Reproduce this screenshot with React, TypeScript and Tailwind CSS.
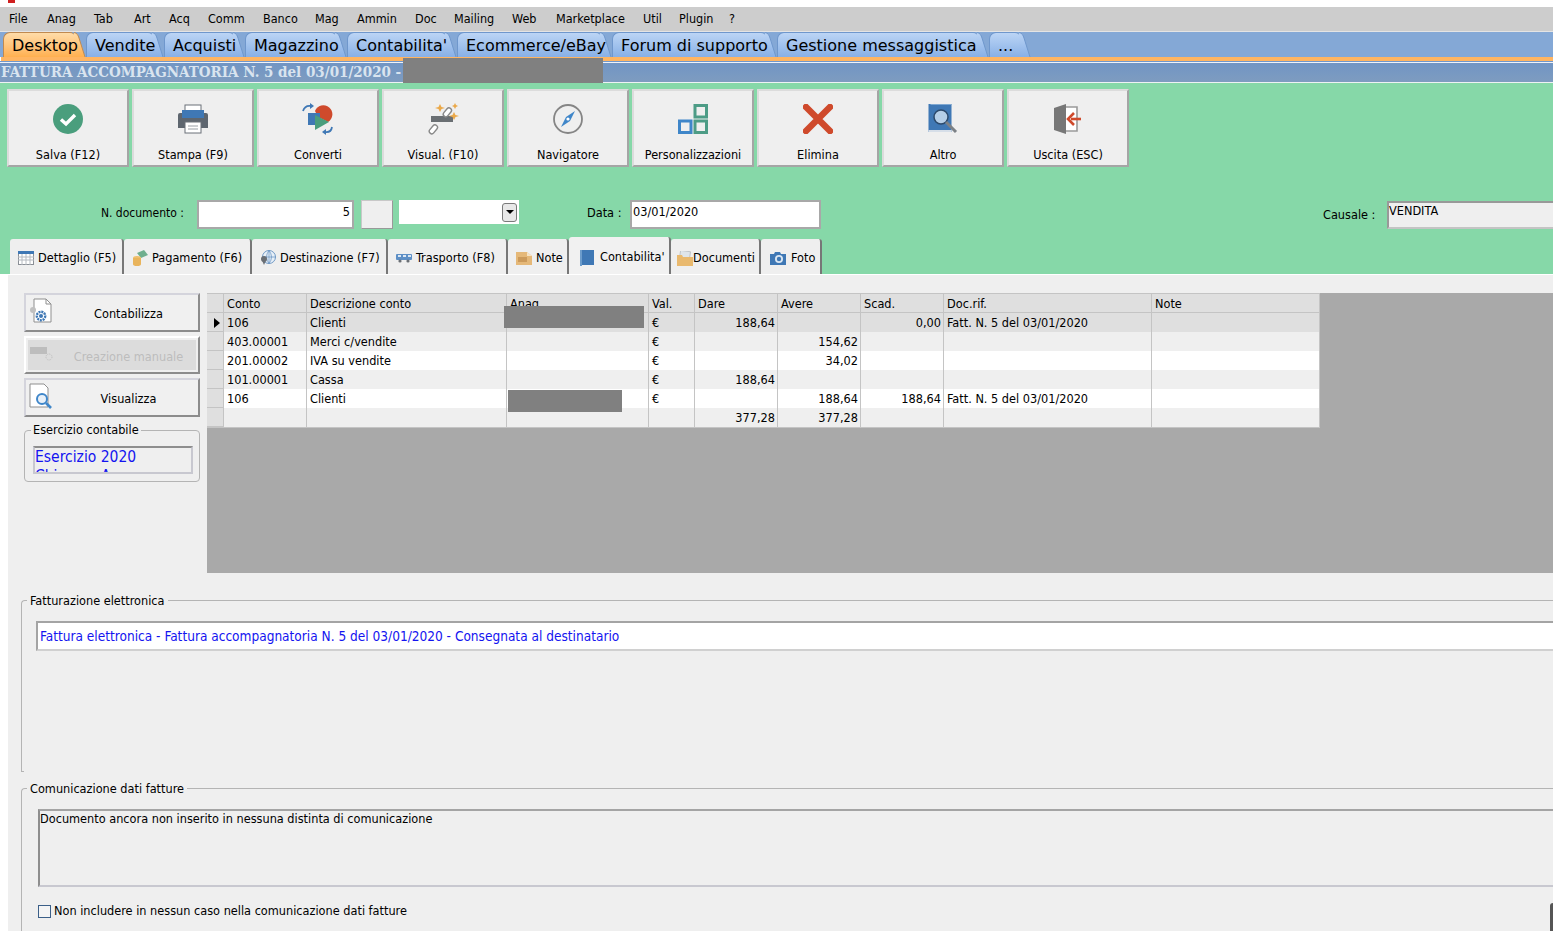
import React from 'react';

const menuItems = [
  { label: 'File', w: 'w-[38px]' },
  { label: 'Anag', w: 'w-[47px]' },
  { label: 'Tab', w: 'w-[40px]' },
  { label: 'Art', w: 'w-[35px]' },
  { label: 'Acq', w: 'w-[39px]' },
  { label: 'Comm', w: 'w-[55px]' },
  { label: 'Banco', w: 'w-[52px]' },
  { label: 'Mag', w: 'w-[42px]' },
  { label: 'Ammin', w: 'w-[58px]' },
  { label: 'Doc', w: 'w-[39px]' },
  { label: 'Mailing', w: 'w-[58px]' },
  { label: 'Web', w: 'w-[44px]' },
  { label: 'Marketplace', w: 'w-[87px]' },
  { label: 'Util', w: 'w-[36px]' },
  { label: 'Plugin', w: 'w-[50px]' },
  { label: '?', w: 'w-[14px]' },
];

const mainTabs = [
  { label: 'Desktop', w: 'w-[83px]', active: true },
  { label: 'Vendite', w: 'w-[78px]' },
  { label: 'Acquisti', w: 'w-[81px]' },
  { label: 'Magazzino', w: 'w-[102px]' },
  { label: "Contabilita'", w: 'w-[110px]' },
  { label: 'Ecommerce/eBay', w: 'w-[155px]' },
  { label: 'Forum di supporto', w: 'w-[165px]' },
  { label: 'Gestione messaggistica', w: 'w-[212px]' },
  { label: '...', w: 'w-[42px]' },
];

const MainTab = ({ label, w, active }: { label: string; w: string; active?: boolean }) => {
  const gradId = active ? 'tailOn' : 'tailOff';
  return (
    <div className={`relative h-[25px] shrink-0 ${w}`}>
      <div
        className={`absolute left-0 top-0 bottom-0 right-[11px] rounded-tl-[7px] rounded-tr-[5px] border-t border-l ${
          active
            ? 'bg-gradient-to-b from-[#ffdca8] to-[#ffb04f] border-[#c08a50]'
            : 'bg-gradient-to-b from-[#bcd5f5] to-[#88b0e6] border-[#6f97cc]'
        }`}
      />
      <svg className="absolute right-0 top-0" width="12" height="25" viewBox="0 0 12 25">
        <defs>
          <linearGradient id={gradId} x1="0" y1="0" x2="0" y2="1">
            <stop offset="0" stopColor={active ? '#ffdca8' : '#bcd5f5'} />
            <stop offset="1" stopColor={active ? '#ffb04f' : '#88b0e6'} />
          </linearGradient>
        </defs>
        <path d="M0 0.5 C3 1 4 3 5 6 L11 25 H0 Z" fill={`url(#${gradId})`} />
        <path d="M0 0.5 C3 1 4 3 5 6 L11 25" fill="none" stroke={active ? '#c08a50' : '#6f97cc'} />
      </svg>
      <span className="absolute left-[9px] top-0 leading-[27px] whitespace-nowrap">{label}</span>
    </div>
  );
};

const IconSave = () => (
  <svg width="30" height="30" viewBox="0 0 30 30">
    <circle cx="15" cy="15" r="15" fill="#4a9e7d" />
    <path d="M8 15.5 L13 20 L22 11" fill="none" stroke="#fff" strokeWidth="3.4" />
  </svg>
);

const IconPrint = () => (
  <svg width="30" height="30" viewBox="0 0 30 30">
    <rect x="7" y="1" width="16" height="8" fill="#fff" stroke="#6b7078" />
    <path d="M2 9 H28 Q30 9 30 11 V24 H0 V11 Q0 9 2 9 Z" fill="#5e666f" />
    <rect x="4" y="6" width="22" height="8" fill="#3f78b5" />
    <rect x="7" y="18" width="16" height="11" fill="#fff" stroke="#6b7078" />
    <path d="M10 22 H20 M10 25 H20" stroke="#9aa0a6" />
  </svg>
);

const IconConvert = () => (
  <svg width="32" height="32" viewBox="0 0 32 32">
    <path d="M13 8 A9 9 0 1 1 26 19 L16 14 Z" fill="#cf4a2c" />
    <rect x="6" y="10" width="12" height="12" fill="#3f78b5" />
    <path d="M13 12 L27 19 L13 27 Z" fill="#4a9e7d" />
    <path d="M1 8 Q3 2 9 3" fill="none" stroke="#3f78b5" strokeWidth="1.8" />
    <path d="M8 0 L12 3 L8 6 Z" fill="#3f78b5" />
    <path d="M30 24 Q29 30 23 29" fill="none" stroke="#3f78b5" strokeWidth="1.8" />
    <path d="M24 26 L20 29 L24 32 Z" fill="#3f78b5" />
  </svg>
);

const IconLink = () => (
  <svg width="32" height="32" viewBox="0 0 32 32">
    <rect x="4" y="13" width="22" height="6" fill="#6a6f73" />
    <rect x="18" y="4" width="5" height="10" rx="2.5" transform="rotate(40 20 9)" fill="#fff" stroke="#888" strokeWidth="1.4" />
    <rect x="4" y="21" width="5" height="10" rx="2.5" transform="rotate(40 6 26)" fill="#fff" stroke="#888" strokeWidth="1.4" />
    <path d="M13 1 L14.5 4 L18 5 L14.5 6 L13 9 L11.5 6 L8 5 L11.5 4 Z" fill="#eba94a" />
    <path d="M28 0 L29 2 L31 3 L29 4 L28 6 L27 4 L25 3 L27 2 Z" fill="#eba94a" />
    <path d="M27 9 L28.5 12 L32 13 L28.5 14 L27 17 L25.5 14 L22 13 L25.5 12 Z" fill="#eba94a" />
  </svg>
);

const IconCompass = () => (
  <svg width="30" height="30" viewBox="0 0 30 30">
    <circle cx="15" cy="15" r="14" fill="none" stroke="#858585" strokeWidth="1.8" />
    <path d="M22 7 L17 17 L8 23 L13 13 Z" fill="#3f86c9" />
    <circle cx="15" cy="15" r="1.6" fill="#fff" />
  </svg>
);

const IconBlocks = () => (
  <svg width="30" height="30" viewBox="0 0 30 30">
    <rect x="17" y="1.5" width="11.5" height="11.5" fill="none" stroke="#4d9c86" strokeWidth="3" />
    <rect x="1.5" y="17" width="11.5" height="11.5" fill="none" stroke="#3f86c9" strokeWidth="3" />
    <rect x="17" y="17" width="11.5" height="11.5" fill="none" stroke="#4d9c86" strokeWidth="3" />
  </svg>
);

const IconDelete = () => (
  <svg width="30" height="30" viewBox="0 0 30 30">
    <path d="M3 3 L27 27 M27 3 L3 27" stroke="#cf4a2c" strokeWidth="6.5" strokeLinecap="round" />
  </svg>
);

const IconBook = () => (
  <svg width="30" height="30" viewBox="0 0 30 30">
    <rect x="0.5" y="0" width="23" height="28" fill="#3f78b5" />
    <rect x="0.5" y="26" width="23" height="2" fill="#d6deE8" />
    <rect x="2.5" y="0" width="21" height="1" fill="#7fa8d2" />
    <circle cx="13" cy="13" r="7" fill="#b5cfe8" stroke="#2c4a6c" strokeWidth="1.5" />
    <path d="M18 18 L28 28" stroke="#7c8186" strokeWidth="3" />
  </svg>
);

const IconExit = () => (
  <svg width="30" height="30" viewBox="0 0 30 30">
    <path d="M12 3 H24 V27 H12" fill="#fff" stroke="#9a9a9a" strokeWidth="1.6" />
    <path d="M1 4 L13 0 V30 L1 26 Z" fill="#777" />
    <path d="M28 15 H18" stroke="#cf4a2c" strokeWidth="2.6" />
    <path d="M21 9 L15 15 L21 21" fill="none" stroke="#cf4a2c" strokeWidth="2.6" />
  </svg>
);

const toolbar = [
  { label: 'Salva (F12)', icon: <IconSave /> },
  { label: 'Stampa (F9)', icon: <IconPrint /> },
  { label: 'Converti', icon: <IconConvert /> },
  { label: 'Visual. (F10)', icon: <IconLink /> },
  { label: 'Navigatore', icon: <IconCompass /> },
  { label: 'Personalizzazioni', icon: <IconBlocks /> },
  { label: 'Elimina', icon: <IconDelete /> },
  { label: 'Altro', icon: <IconBook /> },
  { label: 'Uscita (ESC)', icon: <IconExit /> },
];

const TabCalendar = () => (
  <svg width="16" height="14" viewBox="0 0 16 14">
    <rect x="0.5" y="0.5" width="15" height="13" fill="#fff" stroke="#8a8f96" />
    <rect x="0" y="0" width="16" height="3" fill="#3f78b5" />
    <path d="M0 6 H16 M0 9 H16 M4 3 V14 M8 3 V14 M12 3 V14" stroke="#b5bac0" />
  </svg>
);
const TabMoney = () => (
  <svg width="16" height="16" viewBox="0 0 16 16">
    <path d="M5 3 L12 0 L16 5 L9 8 Z" fill="#6fae8e" />
    <ellipse cx="5" cy="8" rx="4" ry="2" fill="#efbf6a" />
    <rect x="1" y="8" width="8" height="6" fill="#e9b45c" />
    <ellipse cx="5" cy="14" rx="4" ry="2" fill="#e9b45c" />
  </svg>
);
const TabGlobe = () => (
  <svg width="16" height="16" viewBox="0 0 16 16">
    <circle cx="9" cy="7" r="6.5" fill="#e8f0f8" stroke="#6d97c4" />
    <path d="M2.5 7 H15.5 M9 0.5 V13.5 M9 0.5 Q4 7 9 13.5 M9 0.5 Q14 7 9 13.5" fill="none" stroke="#6d97c4" strokeWidth="0.8" />
    <circle cx="4" cy="9" r="3" fill="#6a6f75" />
    <path d="M2 10.5 L4 15 L6 10.5 Z" fill="#6a6f75" />
  </svg>
);
const TabTruck = () => (
  <svg width="16" height="10" viewBox="0 0 16 10">
    <rect x="0" y="1" width="16" height="6" rx="1" fill="#5d8fc6" />
    <rect x="2" y="2" width="3" height="2" fill="#dbe7f3" />
    <rect x="7" y="2" width="3" height="2" fill="#dbe7f3" />
    <rect x="12" y="2" width="3" height="2" fill="#dbe7f3" />
    <circle cx="4" cy="8" r="1.6" fill="#6a6f75" />
    <circle cx="12" cy="8" r="1.6" fill="#6a6f75" />
  </svg>
);
const TabNote = () => (
  <svg width="16" height="14" viewBox="0 0 16 14">
    <path d="M0 1 H11 L16 5 V14 H0 Z" fill="#e5b878" />
    <path d="M11 1 V5 H16 Z" fill="#f6e3c5" />
    <rect x="2" y="6" width="9" height="5" fill="#cc9a5a" />
  </svg>
);
const TabLedger = () => (
  <svg width="14" height="16" viewBox="0 0 14 16">
    <rect x="1" y="0" width="13" height="15" fill="#3f78b5" />
    <rect x="0" y="0" width="2" height="16" fill="#6c9ccb" />
  </svg>
);
const TabFolder = () => (
  <svg width="16" height="15" viewBox="0 0 16 15">
    <rect x="3" y="0" width="10" height="8" fill="#dfe5ea" stroke="#a7adb3" strokeWidth="0.6" transform="rotate(8 8 4)" />
    <path d="M0 4 H5 L6 6 H16 V15 H0 Z" fill="#e9b96e" />
  </svg>
);
const TabCamera = () => (
  <svg width="16" height="13" viewBox="0 0 16 13">
    <path d="M0 2 H4 L5 0 H10 L11 2 H16 V13 H0 Z" fill="#3f78b5" />
    <circle cx="9" cy="7" r="4" fill="#dbe7f3" />
    <circle cx="9" cy="7" r="2.2" fill="#3f78b5" />
  </svg>
);

const docTabs = [
  { label: 'Dettaglio (F5)', icon: <TabCalendar />, w: 'w-[114px]', pl: 'pl-[8px]', gap: 'gap-[4px]' },
  { label: 'Pagamento (F6)', icon: <TabMoney />, w: 'w-[128px]', pl: 'pl-[8px]', gap: 'gap-[4px]' },
  { label: 'Destinazione (F7)', icon: <TabGlobe />, w: 'w-[136px]', pl: 'pl-[8px]', gap: 'gap-[4px]' },
  { label: 'Trasporto (F8)', icon: <TabTruck />, w: 'w-[120px]', pl: 'pl-[8px]', gap: 'gap-[4px]' },
  { label: 'Note', icon: <TabNote />, w: 'w-[61px]', pl: 'pl-[8px]', gap: 'gap-[4px]' },
  { label: "Contabilita'", icon: <TabLedger />, w: 'w-[102px]', pl: 'pl-[11px]', gap: 'gap-[6px]', active: true },
  { label: 'Documenti', icon: <TabFolder />, w: 'w-[90px]', pl: 'pl-[6px]', gap: 'gap-0' },
  { label: 'Foto', icon: <TabCamera />, w: 'w-[61px]', pl: 'pl-[9px]', gap: 'gap-[5px]' },
];

const rows = [
  { bg: 'bg-[#dfdfdf]', marker: true, c: ['106', 'Clienti', '', '€', '188,64', '', '0,00', 'Fatt. N. 5 del 03/01/2020', ''] },
  { bg: 'bg-[#efefef]', c: ['403.00001', 'Merci c/vendite', '', '€', '', '154,62', '', '', ''] },
  { bg: 'bg-white', c: ['201.00002', 'IVA su vendite', '', '€', '', '34,02', '', '', ''] },
  { bg: 'bg-[#efefef]', c: ['101.00001', 'Cassa', '', '€', '188,64', '', '', '', ''] },
  { bg: 'bg-white', c: ['106', 'Clienti', '', '€', '', '188,64', '188,64', 'Fatt. N. 5 del 03/01/2020', ''] },
  { bg: 'bg-[#efefef]', c: ['', '', '', '', '377,28', '377,28', '', '', ''] },
];

const headers = ['Conto', 'Descrizione conto', 'Anag.', 'Val.', 'Dare', 'Avere', 'Scad.', 'Doc.rif.', 'Note'];
const rightCols = [4, 5, 6];

const SideButton = ({ label, icon, className }: { label: string; icon: React.ReactNode; className: string }) => (
  <div className={`relative flex items-center justify-center pt-[3px] w-[176px] bg-[#f0f0f0] border-2 border-t-[#d4d4dc] border-l-[#d4d4dc] border-b-[#8c8c8c] border-r-[#8c8c8c] ${className}`}>
    <span className="absolute left-[3px] top-[3px]">{icon}</span>
    <span className="ml-[33px]">{label}</span>
  </div>
);

export default function App() {
  return (
    <div className="relative w-[1553px] h-[931px] overflow-hidden bg-white text-[12.6px] text-black font-['DejaVu_Sans_Condensed','Noto_Sans',sans-serif]">
      <div className="h-[3px] w-[7px] ml-[8px] bg-[#d02020]" />
      <div className="h-[4px]" />

      {/* menu */}
      <div className="flex items-center h-[25px] pl-[9px] pt-px bg-[#cdcdcd] text-[12.5px] border-b border-[#e4e4e4]">
        {menuItems.map((m) => (
          <span key={m.label} className={`shrink-0 ${m.w}`}>{m.label}</span>
        ))}
      </div>

      {/* main tabs */}
      <div className="flex pl-[3px] h-[25px] bg-[#84a8d6] text-[16px] font-['DejaVu_Sans',sans-serif]">
        {mainTabs.map((t) => (
          <MainTab key={t.label} {...t} />
        ))}
      </div>
      <div className="h-[4px] ml-[1px] bg-[#ffb562]" />
      <div className="h-px bg-[#6f97cc]" />
      <div className="h-px bg-[#f1f3f8]" />
      <div className="h-[19px] pl-[1px] leading-[18px] bg-gradient-to-b from-[#7195c4] to-[#7e9cc0] text-[#d9e4ef] text-[15px] font-bold whitespace-nowrap font-['DejaVu_Serif_Condensed','DejaVu_Serif',serif]">
        FATTURA ACCOMPAGNATORIA N. 5 del 03/01/2020 -
      </div>
      <div className="h-px bg-[#eef2f4]" />

      {/* green area */}
      <div className="h-[191px] bg-[#86d8a8] pt-[6px]">
        <div className="flex gap-[3px] pl-[7px]">
          {toolbar.map((b) => (
            <div
              key={b.label}
              className="flex flex-col items-center w-[122px] h-[78px] bg-[#efefef] border-2 border-t-[#dcdcdc] border-l-[#dcdcdc] border-b-[#a5a5a5] border-r-[#a5a5a5]"
            >
              <div className="h-[56px] shrink-0 flex items-center justify-center">{b.icon}</div>
              <span className="leading-[16px]">{b.label}</span>
            </div>
          ))}
        </div>

        <div className="flex mt-[33px] h-[29px] relative">
          <span className="w-[184px] text-right pt-[4px] text-[12px]">N. documento :</span>
          <div className="ml-[13px] w-[157px] h-[29px] bg-white border-2 border-[#a8a8a8] text-right pr-[2px] pt-[1px]">5</div>
          <div className="ml-[7px] w-[32px] h-[29px] bg-[#efefef] border border-[#c8c8c8] border-b-[#999] border-r-[#999]" />
          <div className="ml-[6px] w-[120px] h-[24px] bg-white flex items-center justify-end pr-[2px]">
            <div className="flex items-center justify-center w-[15px] h-[19px] rounded-[3px] bg-[#e8e8e8] border border-[#7a7a7a]">
              <span className="w-0 h-0 border-x-[4px] border-x-transparent border-t-[4px] border-t-black" />
            </div>
          </div>
          <span className="ml-[68px] pt-[4px] w-[35px] whitespace-nowrap">Data :</span>
          <div className="ml-[8px] w-[191px] h-[29px] bg-white border-2 border-[#a8a8a8] pl-[1px] pt-[1px]">03/01/2020</div>
          <span className="ml-[502px] pt-[6px] w-[54px] whitespace-nowrap">Causale :</span>
          <div className="ml-[10px] grow h-[28px] mt-[1px] bg-[#efefef] border-2 border-t-[#999] border-l-[#999] border-b-[#c4c4c4] border-r-0 leading-[16px]">VENDITA</div>
        </div>

        <div className="flex items-end mt-[8px] pl-[10px] h-[37px]">
          {docTabs.map((t) => (
            <div
              key={t.label}
              className={`flex items-center shrink-0 rounded-t-[3px] border-r-2 whitespace-nowrap ${t.w} ${t.pl} ${t.gap} ${
                t.active
                  ? 'h-[37px] bg-[#f1f1f1] border-[#777] pt-[4px]'
                  : 'h-[35px] bg-[#efefef] border-[#777] pt-[3px]'
              }`}
            >
              <span className="shrink-0">{t.icon}</span>
              <span>{t.label}</span>
            </div>
          ))}
        </div>
      </div>

      {/* panel */}
      <div className="ml-[8px] h-[657px] bg-[#efefef] border-t border-white">
        <div className="flex pt-[18px] pl-[16px] h-[299px]">
          <div className="w-[176px] shrink-0 flex flex-col">
            <SideButton
              label="Contabilizza"
              className="h-[39px]"
              icon={
                <svg width="24" height="26" viewBox="0 0 24 26">
                  <path d="M5 1 H17 L22 6 V24 H5 Z" fill="#fff" stroke="#8f8f8f" />
                  <path d="M17 1 V6 H22" fill="none" stroke="#8f8f8f" />
                  <circle cx="4" cy="12" r="3" fill="#c0c0c0" />
                  <circle cx="12" cy="18" r="4.2" fill="none" stroke="#3f78b5" strokeWidth="2.4" strokeDasharray="2 0.8" />
                  <circle cx="12" cy="18" r="2" fill="#3f78b5" />
                </svg>
              }
            />
            <div className="mt-[4px] h-[38px] w-[176px] border-2 border-t-white border-l-white border-b-[#8c8c8c] border-r-[#8c8c8c] p-[2px]">
              <div className="relative h-full bg-[#dcdcdc] text-[#bdbdbd] flex items-center justify-center pt-[5px]">
                <svg className="absolute left-[1px] top-[5px]" width="24" height="16" viewBox="0 0 24 16">
                  <rect x="1" y="2" width="17" height="7" fill="#bdbdbd" />
                  <circle cx="20" cy="12" r="3" fill="none" stroke="#bdbdbd" strokeDasharray="1 1" />
                </svg>
                <span className="ml-[33px]">Creazione manuale</span>
              </div>
            </div>
            <SideButton
              label="Visualizza"
              className="h-[39px] mt-[4px]"
              icon={
                <svg width="24" height="26" viewBox="0 0 24 26">
                  <path d="M1 1 H15 L19 5 V24 H1 Z" fill="#fff" stroke="#8f8f8f" />
                  <circle cx="13" cy="16" r="5" fill="#e8f0f8" stroke="#3f86c9" strokeWidth="2" />
                  <path d="M17 20 L22 25" stroke="#3f86c9" strokeWidth="2.6" />
                </svg>
              }
            />
            <div className="relative mt-[13px] h-[52px] border border-[#b4b4b4] rounded-[4px] pl-[8px] pr-[6px] pt-[15px]">
              <span className="absolute left-[6px] -top-[8px] px-[2px] bg-[#efefef] leading-[14px] whitespace-nowrap">Esercizio contabile</span>
              <div className="h-[28px] overflow-hidden border-2 border-t-[#8e8e8e] border-l-[#c8c8d0] border-b-[#c8c8d0] border-r-[#c8c8d0] text-[15.5px] leading-[19px] text-[#1414f0]">
                <div>Esercizio 2020</div>
                <div>Chiusura Anno</div>
              </div>
            </div>
          </div>

          <div className="ml-[7px] grow h-[280px] bg-[#a9a9a9] overflow-hidden">
            <div className="grid w-[1113px] border-y border-r-2 border-[#c4c4c4] grid-cols-[17px_83px_200px_142px_46px_83px_83px_83px_208px_168px]">
              <div className="h-[19px] bg-[#dfdfdf] border-r border-b border-[#c4c4c4]" />
              {headers.map((h) => (
                <div key={h} className="h-[19px] bg-[#dfdfdf] border-r border-b border-[#c4c4c4] pl-[3px] leading-[19px] whitespace-nowrap overflow-hidden">
                  {h}
                </div>
              ))}
              {rows.map((r, i) =>
                [
                  <div key={`m${i}`} className="h-[19px] flex items-center justify-center pl-[3px] pt-px bg-[#dfdfdf] border-r border-b border-[#c4c4c4]">
                    {r.marker && <span className="w-0 h-0 border-y-[5px] border-y-transparent border-l-[6px] border-l-black" />}
                  </div>,
                  ...r.c.map((v, j) => (
                    <div
                      key={`${i}-${j}`}
                      className={`h-[19px] leading-[19px] pl-[3px] pr-[2px] border-r border-[#c4c4c4] whitespace-nowrap ${r.bg} ${rightCols.includes(j) ? 'text-right' : 'text-left'}`}
                    >
                      {v}
                    </div>
                  )),
                ]
              )}
            </div>
          </div>
        </div>

        <div className="relative ml-[13px] mt-[26px] h-[172px] border-t border-l border-[#b4b4b4] rounded-tl-[4px] pt-[20px] pl-[14px]">
          <span className="absolute left-[5px] -top-[7px] px-[3px] bg-[#efefef] leading-[14px] whitespace-nowrap">Fatturazione elettronica</span>
          <div className="h-[30px] bg-white border-2 border-t-[#a4a4a4] border-l-[#a4a4a4] border-b-[#d0d0d0] border-r-0 pl-[2px] leading-[26px] text-[13.55px] text-[#1414f0] whitespace-nowrap">
            Fattura elettronica - Fattura accompagnatoria N. 5 del 03/01/2020 - Consegnata al destinatario
          </div>
          <span className="absolute -left-px bottom-0 w-[3px] h-px bg-[#b4b4b4]" />
        </div>

        <div className="relative ml-[13px] mt-[16px] h-[160px] border-t border-l border-[#b4b4b4] rounded-tl-[4px] pt-[20px] pl-[16px]">
          <span className="absolute left-[5px] -top-[7px] px-[3px] bg-[#efefef] leading-[14px] whitespace-nowrap">Comunicazione dati fatture</span>
          <div className="h-[78px] border-2 border-t-[#a4a4a4] border-l-[#8e8e8e] border-b-[#c8c8d0] border-r-0 leading-[16px]">
            Documento ancora non inserito in nessuna distinta di comunicazione
          </div>
          <div className="flex items-center mt-[15px] gap-[3px]">
            <span className="w-[13px] h-[13px] border border-[#3b5f88] bg-[#f4f4f4]" />
            <span>Non includere in nessun caso nella comunicazione dati fatture</span>
          </div>
        </div>
      </div>

      {/* redactions over the form */}
      <div className="absolute left-[403px] top-[58px] w-[200px] h-[25px] bg-[#808080]" />
      <div className="absolute left-[504px] top-[306px] w-[140px] h-[22px] bg-[#808080]" />
      <div className="absolute left-[508px] top-[390px] w-[114px] h-[22px] bg-[#808080]" />
      <div className="absolute right-0 top-[903px] w-[3px] h-[28px] rounded-tl-[3px] bg-[#555]" />
    </div>
  );
}
